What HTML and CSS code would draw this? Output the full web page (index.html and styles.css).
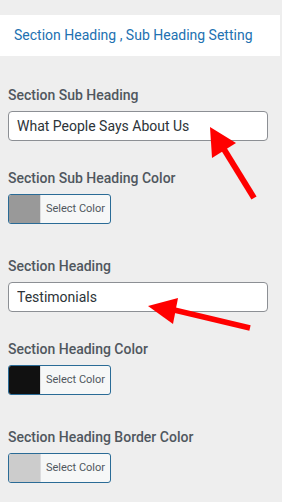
FILE: index.html
```html
<!DOCTYPE html>
<html lang="en">
<head>
  <meta charset="UTF-8" />
  <title>Section Heading Settings</title>
  <link rel="stylesheet" href="styles.css">
</head>
<body>
  <div class="panel-title">Section Heading , Sub Heading Setting</div>

  <div class="controls">
    <div class="field">
      <label class="field-label">Section Sub Heading</label>
      <input class="text-input" type="text" value="What People Says About Us">
    </div>

    <div class="field color-field">
      <label class="field-label">Section Sub Heading Color</label>
      <button class="color-button">
        <span class="swatch" style="background:#999999"></span>
        <span class="color-text">Select Color</span>
      </button>
    </div>

    <div class="field">
      <label class="field-label">Section Heading</label>
      <input class="text-input" type="text" value="Testimonials">
    </div>

    <div class="field color-field">
      <label class="field-label">Section Heading Color</label>
      <button class="color-button">
        <span class="swatch" style="background:#111111"></span>
        <span class="color-text">Select Color</span>
      </button>
    </div>

    <div class="field color-field">
      <label class="field-label">Section Heading Border Color</label>
      <button class="color-button">
        <span class="swatch" style="background:#cccccc"></span>
        <span class="color-text">Select Color</span>
      </button>
    </div>
  </div>

  <!-- annotation arrows -->
  <svg class="arrows" width="282" height="502">
    <line x1="254" y1="198" x2="222" y2="146" stroke="#ff0000" stroke-width="6" />
    <polygon points="210,127 212,158 236,143" fill="#ff0000" />
    <line x1="250" y1="328" x2="170" y2="309" stroke="#ff0000" stroke-width="5.5" />
    <polygon points="148,306 178,298 173,324" fill="#ff0000" />
  </svg>
</body>
</html>
```

FILE: styles.css
```css
body {
  font-family: Roboto, "Liberation Sans", sans-serif;
  background: #eeeeee;
  margin: 0;
  padding: 0;
  color: #50575e;
  position: relative;
  min-height: 502px;
}

.panel-title {
  margin-top: 15px;
  width: 266px;
  height: 41px;
  padding-left: 14px;
  background: #ffffff;
  color: #2271b1;
  font-size: 14px;
  line-height: 41px;
}

.controls {
  padding: 29px 14px 0 8px;
}

.field {
  margin-bottom: 27px;
}

.color-field {
  margin-bottom: 32px;
}

.field-label {
  display: block;
  font-size: 14px;
  font-weight: 500;
  line-height: 20px;
  margin-bottom: 6px;
}

.text-input {
  box-sizing: border-box;
  width: 260px;
  height: 30px;
  margin: 0;
  padding: 0 8px;
  border: 1px solid #8c8f94;
  border-radius: 4px;
  background: #ffffff;
  font-family: inherit;
  font-size: 14px;
  color: #2c3338;
}

.color-button {
  display: flex;
  box-sizing: border-box;
  width: 103px;
  height: 30px;
  margin: 0;
  padding: 0;
  border: 1px solid #2a6b96;
  border-radius: 3px;
  background: #f6f7f7;
  overflow: hidden;
  font-family: inherit;
}

.swatch {
  width: 31px;
  height: 100%;
}

.color-text {
  flex: 1;
  font-size: 11px;
  line-height: 28px;
  color: #50575e;
  text-align: center;
  border-left: 1px solid #dcdcde;
}

.arrows {
  position: absolute;
  top: 0;
  left: 0;
  pointer-events: none;
}
```
